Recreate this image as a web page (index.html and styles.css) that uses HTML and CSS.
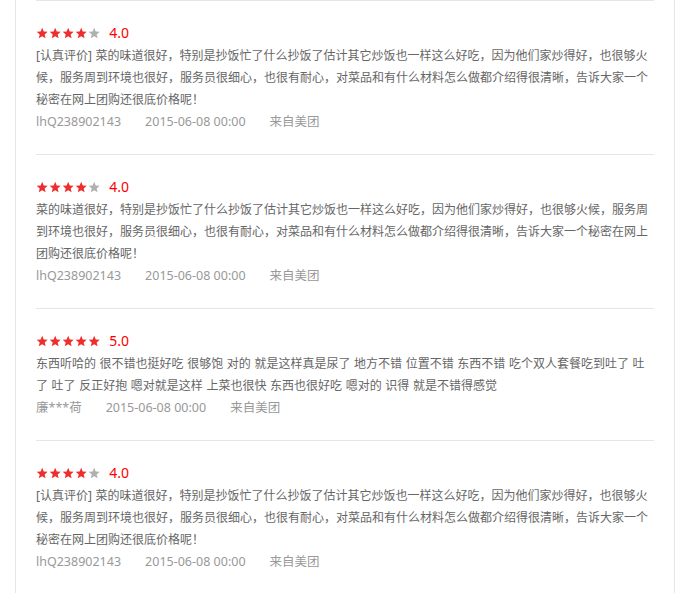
FILE: index.html
```html
<!DOCTYPE html>
<html lang="zh-CN">
<head>
<meta charset="utf-8">
<title>评价列表</title>
<link rel="stylesheet" href="styles.css">
</head>
<body>
<div class="list">
  <div class="item">
    <div class="rating">
      <span class="stars">
        <svg class="star on" viewBox="0 0 24 24"><polygon points="12,1.5 15,8.6 22.6,9.3 16.8,14.3 18.6,21.8 12,17.8 5.4,21.8 7.2,14.3 1.4,9.3 9,8.6"/></svg>
        <svg class="star on" viewBox="0 0 24 24"><polygon points="12,1.5 15,8.6 22.6,9.3 16.8,14.3 18.6,21.8 12,17.8 5.4,21.8 7.2,14.3 1.4,9.3 9,8.6"/></svg>
        <svg class="star on" viewBox="0 0 24 24"><polygon points="12,1.5 15,8.6 22.6,9.3 16.8,14.3 18.6,21.8 12,17.8 5.4,21.8 7.2,14.3 1.4,9.3 9,8.6"/></svg>
        <svg class="star on" viewBox="0 0 24 24"><polygon points="12,1.5 15,8.6 22.6,9.3 16.8,14.3 18.6,21.8 12,17.8 5.4,21.8 7.2,14.3 1.4,9.3 9,8.6"/></svg>
        <svg class="star off" viewBox="0 0 24 24"><polygon points="12,1.5 15,8.6 22.6,9.3 16.8,14.3 18.6,21.8 12,17.8 5.4,21.8 7.2,14.3 1.4,9.3 9,8.6"/></svg>
      </span>
      <span class="score">4.0</span>
    </div>
    <p class="content">[认真评价] 菜的味道很好，特别是抄饭忙了什么抄饭了估计其它炒饭也一样这么好吃，因为他们家炒得好，也很够火候，服务周到环境也很好，服务员很细心，也很有耐心，对菜品和有什么材料怎么做都介绍得很清晰，告诉大家一个秘密在网上团购还很底价格呢！</p>
    <div class="meta"><span>lhQ238902143</span><span>2015-06-08 00:00</span><span>来自美团</span></div>
  </div>
  <div class="item">
    <div class="rating">
      <span class="stars">
        <svg class="star on" viewBox="0 0 24 24"><polygon points="12,1.5 15,8.6 22.6,9.3 16.8,14.3 18.6,21.8 12,17.8 5.4,21.8 7.2,14.3 1.4,9.3 9,8.6"/></svg>
        <svg class="star on" viewBox="0 0 24 24"><polygon points="12,1.5 15,8.6 22.6,9.3 16.8,14.3 18.6,21.8 12,17.8 5.4,21.8 7.2,14.3 1.4,9.3 9,8.6"/></svg>
        <svg class="star on" viewBox="0 0 24 24"><polygon points="12,1.5 15,8.6 22.6,9.3 16.8,14.3 18.6,21.8 12,17.8 5.4,21.8 7.2,14.3 1.4,9.3 9,8.6"/></svg>
        <svg class="star on" viewBox="0 0 24 24"><polygon points="12,1.5 15,8.6 22.6,9.3 16.8,14.3 18.6,21.8 12,17.8 5.4,21.8 7.2,14.3 1.4,9.3 9,8.6"/></svg>
        <svg class="star off" viewBox="0 0 24 24"><polygon points="12,1.5 15,8.6 22.6,9.3 16.8,14.3 18.6,21.8 12,17.8 5.4,21.8 7.2,14.3 1.4,9.3 9,8.6"/></svg>
      </span>
      <span class="score">4.0</span>
    </div>
    <p class="content">菜的味道很好，特别是抄饭忙了什么抄饭了估计其它炒饭也一样这么好吃，因为他们家炒得好，也很够火候，服务周到环境也很好，服务员很细心，也很有耐心，对菜品和有什么材料怎么做都介绍得很清晰，告诉大家一个秘密在网上团购还很底价格呢！</p>
    <div class="meta"><span>lhQ238902143</span><span>2015-06-08 00:00</span><span>来自美团</span></div>
  </div>
  <div class="item">
    <div class="rating">
      <span class="stars">
        <svg class="star on" viewBox="0 0 24 24"><polygon points="12,1.5 15,8.6 22.6,9.3 16.8,14.3 18.6,21.8 12,17.8 5.4,21.8 7.2,14.3 1.4,9.3 9,8.6"/></svg>
        <svg class="star on" viewBox="0 0 24 24"><polygon points="12,1.5 15,8.6 22.6,9.3 16.8,14.3 18.6,21.8 12,17.8 5.4,21.8 7.2,14.3 1.4,9.3 9,8.6"/></svg>
        <svg class="star on" viewBox="0 0 24 24"><polygon points="12,1.5 15,8.6 22.6,9.3 16.8,14.3 18.6,21.8 12,17.8 5.4,21.8 7.2,14.3 1.4,9.3 9,8.6"/></svg>
        <svg class="star on" viewBox="0 0 24 24"><polygon points="12,1.5 15,8.6 22.6,9.3 16.8,14.3 18.6,21.8 12,17.8 5.4,21.8 7.2,14.3 1.4,9.3 9,8.6"/></svg>
        <svg class="star on" viewBox="0 0 24 24"><polygon points="12,1.5 15,8.6 22.6,9.3 16.8,14.3 18.6,21.8 12,17.8 5.4,21.8 7.2,14.3 1.4,9.3 9,8.6"/></svg>
      </span>
      <span class="score">5.0</span>
    </div>
    <p class="content">东西听哈的 很不错也挺好吃 很够饱 对的 就是这样真是尿了 地方不错 位置不错 东西不错 吃个双人套餐吃到吐了 吐了 吐了 反正好抱 嗯对就是这样 上菜也很快 东西也很好吃 嗯对的 识得 就是不错得感觉</p>
    <div class="meta"><span>廉***荷</span><span>2015-06-08 00:00</span><span>来自美团</span></div>
  </div>
  <div class="item">
    <div class="rating">
      <span class="stars">
        <svg class="star on" viewBox="0 0 24 24"><polygon points="12,1.5 15,8.6 22.6,9.3 16.8,14.3 18.6,21.8 12,17.8 5.4,21.8 7.2,14.3 1.4,9.3 9,8.6"/></svg>
        <svg class="star on" viewBox="0 0 24 24"><polygon points="12,1.5 15,8.6 22.6,9.3 16.8,14.3 18.6,21.8 12,17.8 5.4,21.8 7.2,14.3 1.4,9.3 9,8.6"/></svg>
        <svg class="star on" viewBox="0 0 24 24"><polygon points="12,1.5 15,8.6 22.6,9.3 16.8,14.3 18.6,21.8 12,17.8 5.4,21.8 7.2,14.3 1.4,9.3 9,8.6"/></svg>
        <svg class="star on" viewBox="0 0 24 24"><polygon points="12,1.5 15,8.6 22.6,9.3 16.8,14.3 18.6,21.8 12,17.8 5.4,21.8 7.2,14.3 1.4,9.3 9,8.6"/></svg>
        <svg class="star off" viewBox="0 0 24 24"><polygon points="12,1.5 15,8.6 22.6,9.3 16.8,14.3 18.6,21.8 12,17.8 5.4,21.8 7.2,14.3 1.4,9.3 9,8.6"/></svg>
      </span>
      <span class="score">4.0</span>
    </div>
    <p class="content">[认真评价] 菜的味道很好，特别是抄饭忙了什么抄饭了估计其它炒饭也一样这么好吃，因为他们家炒得好，也很够火候，服务周到环境也很好，服务员很细心，也很有耐心，对菜品和有什么材料怎么做都介绍得很清晰，告诉大家一个秘密在网上团购还很底价格呢！</p>
    <div class="meta"><span>lhQ238902143</span><span>2015-06-08 00:00</span><span>来自美团</span></div>
  </div>
</div>
</body>
</html>
```
FILE: styles.css
```css
html, body {
  margin: 0;
  padding: 0;
  background: #fff;
}
body {
  font-family: "Noto Sans", "Noto Sans CJK SC", sans-serif;
  color: #666;
}
.list {
  margin-left: 15px;
  width: 618px;
  padding: 0 20px;
  border-left: 1px solid #e6e6e6;
  border-right: 1px solid #e6e6e6;
}
.item {
  border-top: 1px solid #e6e6e6;
  padding: 20px 0 21px;
}
.rating {
  display: flex;
  align-items: center;
  height: 24px;
}
.stars {
  display: flex;
  gap: 0.6px;
}
.star {
  width: 12.4px;
  height: 12.4px;
  display: block;
}
.star.on { fill: #ee2e2e; }
.star.off { fill: #b0b0b0; }
.score {
  margin-left: 9px;
  font-size: 14px;
  color: #f00;
  line-height: 24px;
}
.content {
  margin: 0;
  font-size: 12px;
  word-spacing: 0.5px;
  line-height: 22px;
  color: #666;
}
.meta {
  display: flex;
  gap: 24px;
  font-size: 12.5px;
  line-height: 22px;
  color: #999;
}
```
